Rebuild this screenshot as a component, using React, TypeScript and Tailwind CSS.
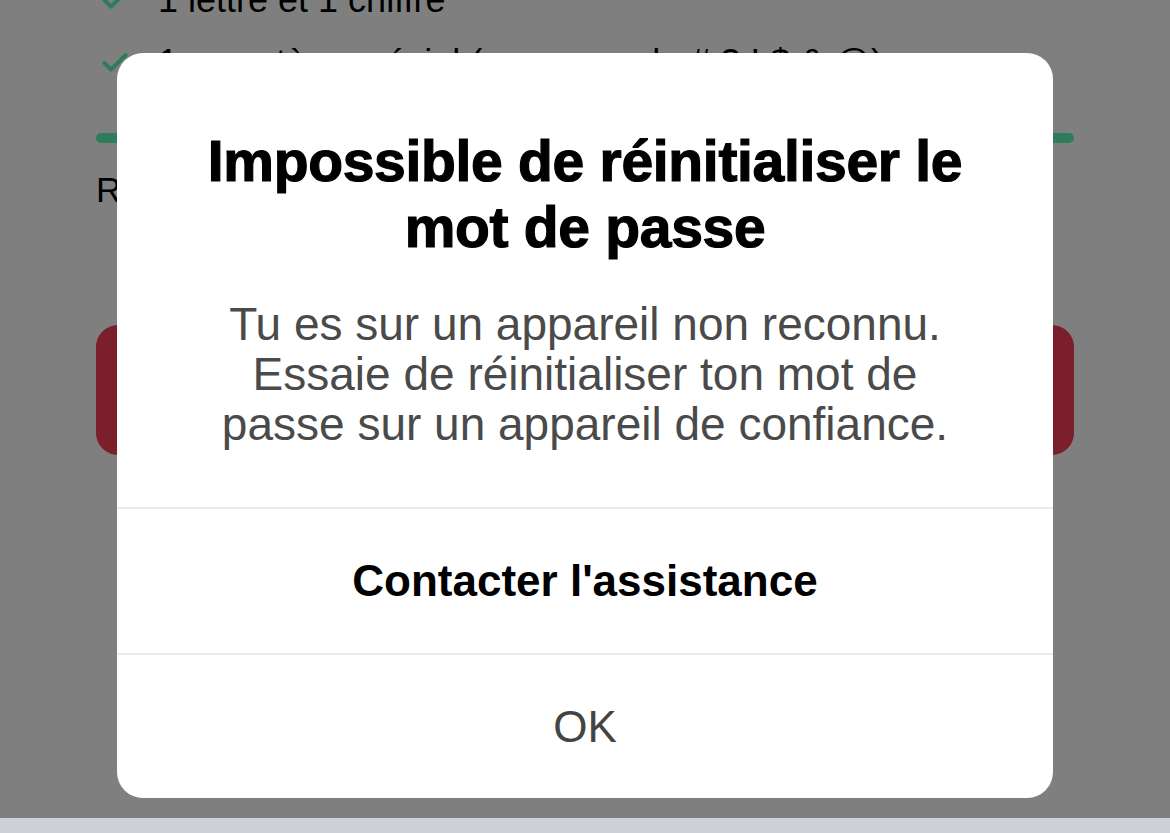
import { Check } from 'lucide-react';

const rules = ['1 lettre et 1 chiffre', '1 caractère spécial (par exemple # ? ! $ & @)'];

function ResetPage() {
  return (
    <div className="px-[96px]">
      <ul className="-mt-[22px] flex flex-col gap-[19px]">
        {rules.map((rule) => (
          <li key={rule} className="flex items-center gap-[27px] pl-[3px]">
            <Check size={32} strokeWidth={3} className="text-[#5cfab4]" />
            <span className="text-[36px] leading-[44px] text-black">{rule}</span>
          </li>
        ))}
      </ul>

      <div className="mt-[48px] h-[10px] rounded-full bg-[#5cfab4]" />
      <p className="mt-[27px] text-[35px] leading-[40px] text-black">Robuste</p>

      <button className="mt-[115px] flex h-[130px] w-full items-center justify-center rounded-[22px] bg-[#f43e56] text-[40px] font-bold text-white">
        Réinitialiser
      </button>
    </div>
  );
}

function Alert() {
  return (
    <div className="flex h-[745px] w-[936px] flex-col overflow-hidden rounded-[26px] bg-white">
      <div className="flex h-[454px] flex-col items-center px-[60px] pt-[75px] text-center">
        <h2 className="max-w-[800px] text-[57px] font-bold leading-[66px] tracking-[-0.3px] text-black [-webkit-text-stroke:1.2px_black]">
          Impossible de réinitialiser le mot de passe
        </h2>
        <p className="mt-[39px] max-w-[770px] text-[46px] leading-[50px] text-[#4a4a4a]">
          Tu es sur un appareil non reconnu. Essaie de réinitialiser ton mot de passe sur un appareil de confiance.
        </p>
      </div>
      <button className="flex h-[146px] items-center justify-center border-t-2 border-[#ececec] text-[44px] font-bold text-black">
        Contacter l'assistance
      </button>
      <button className="flex flex-1 items-center justify-center border-t-2 border-[#ececec] text-[44px] text-[#444444]">
        OK
      </button>
    </div>
  );
}

export default function App() {
  return (
    <div className="flex h-[833px] w-[1170px] flex-col overflow-hidden font-['Liberation_Sans',Arial,sans-serif]">
      <div className="relative h-[818px] overflow-hidden bg-white">
        <ResetPage />
        <div className="absolute inset-0 flex justify-center bg-black/50 pt-[53px]">
          <Alert />
        </div>
      </div>
      <div className="flex-1 bg-[#cdd1d6]" />
    </div>
  );
}
